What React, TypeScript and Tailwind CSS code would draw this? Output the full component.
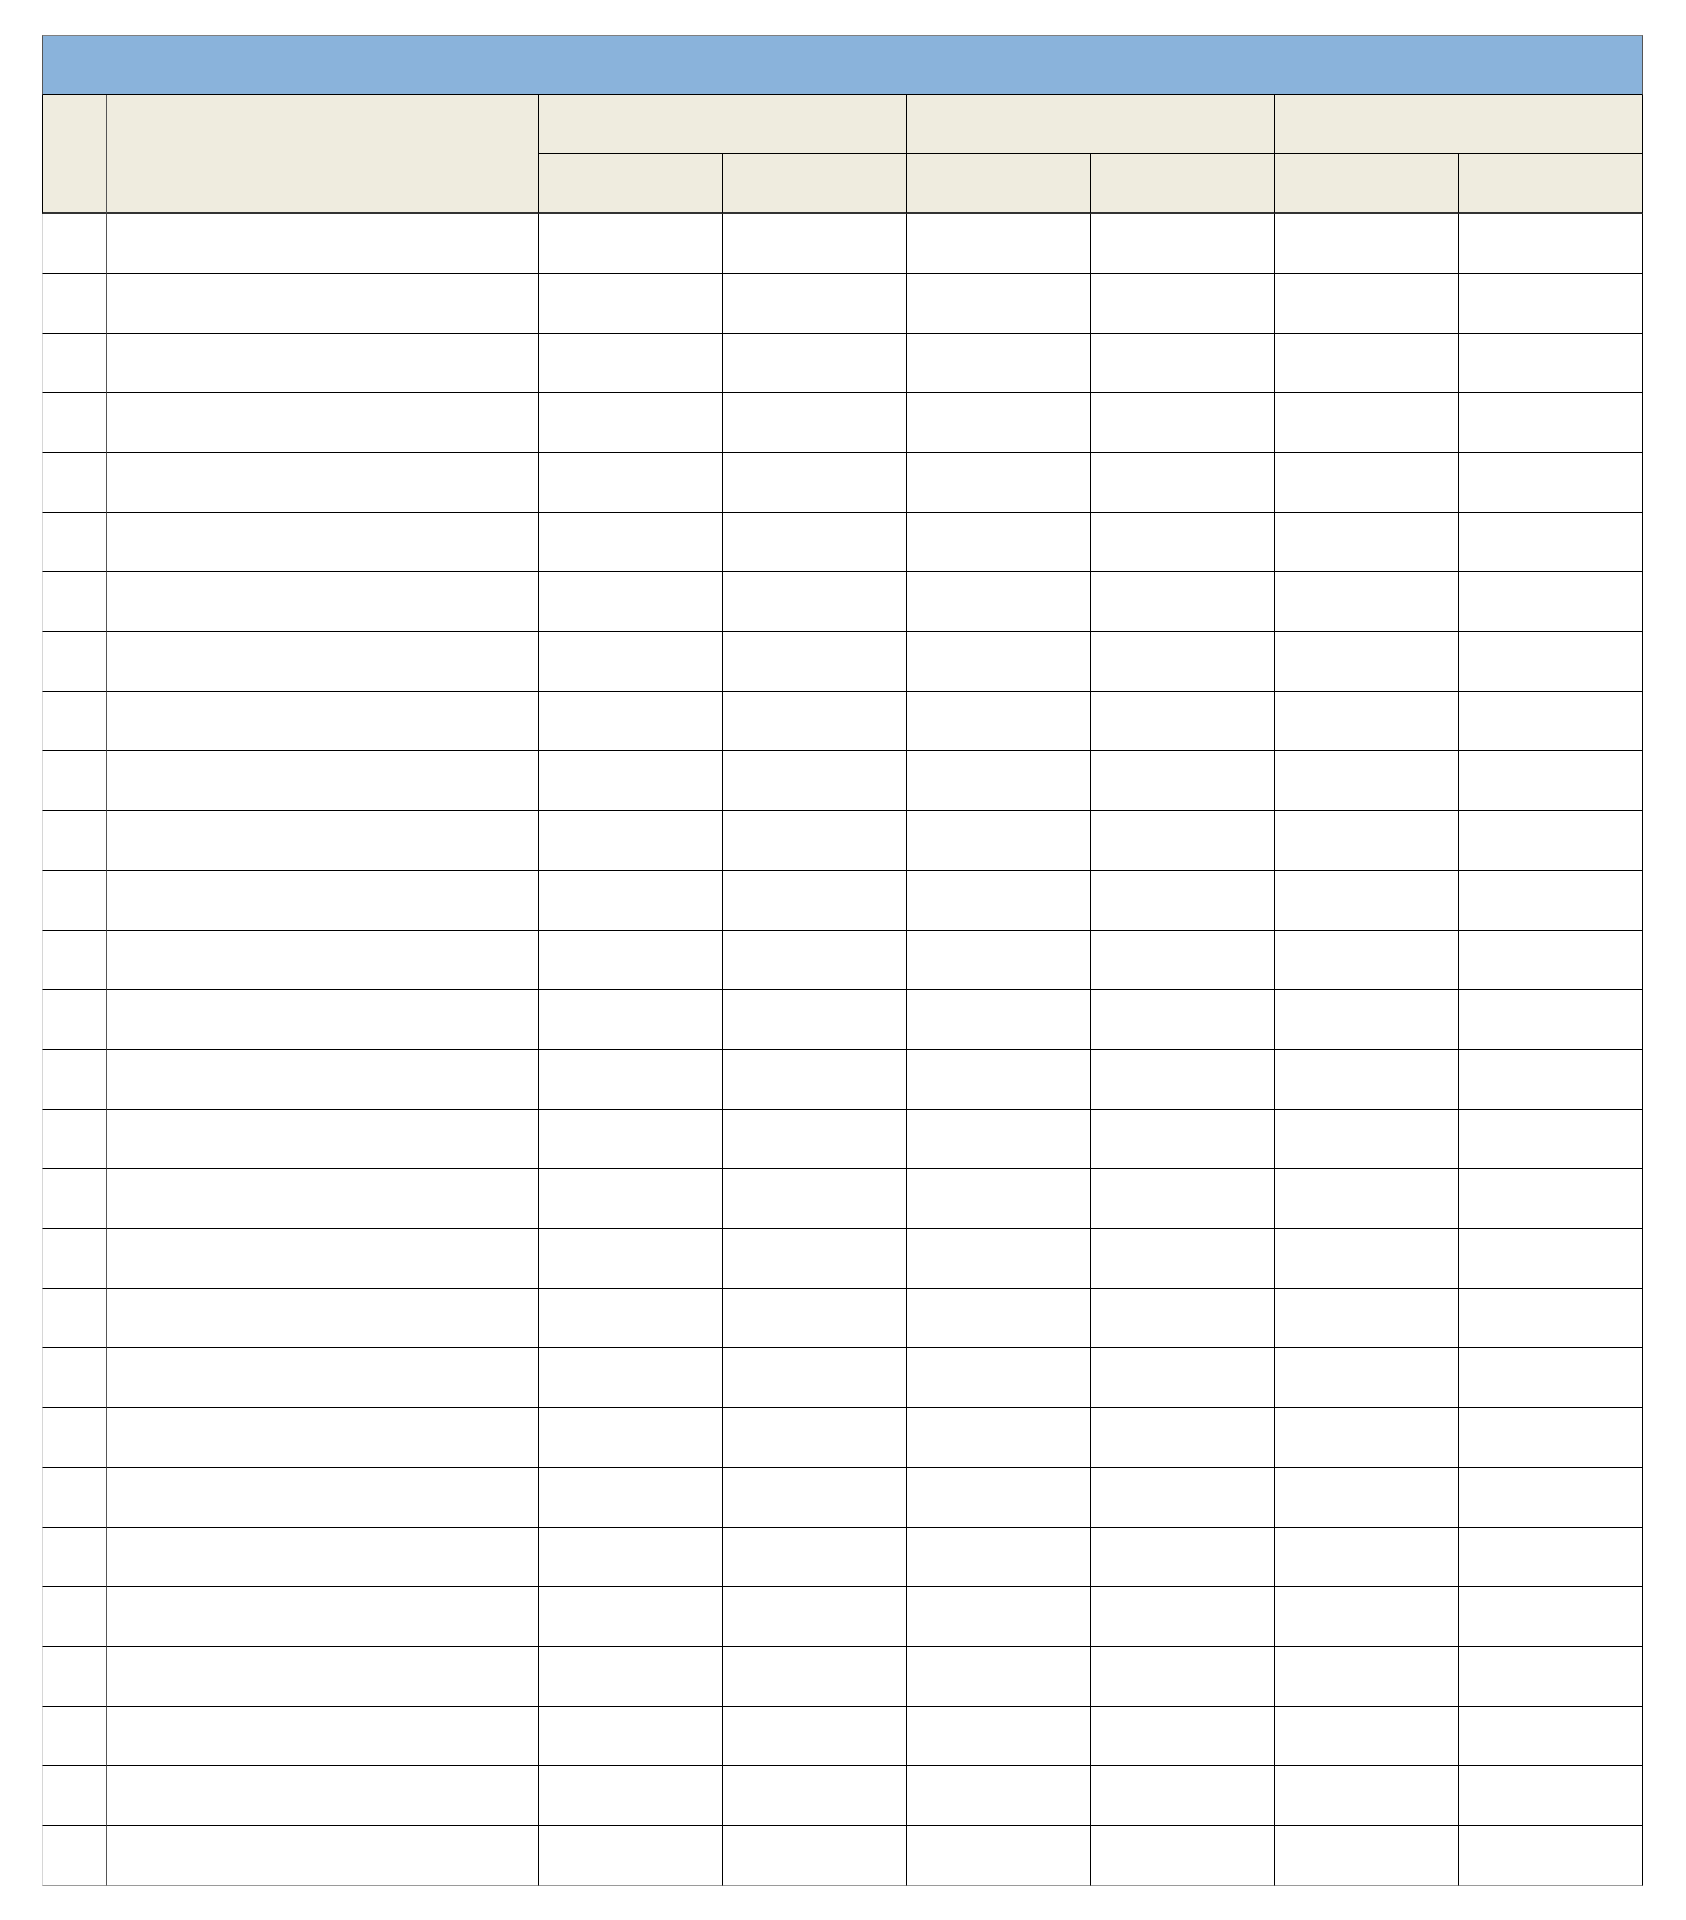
const subCols = 6;
const bodyRows = 28;

function Cell({ className = "" }: { className?: string }) {
  return <div className={`border-r border-b border-black ${className}`} />;
}

export default function App() {
  return (
    <div className="min-h-[1920px] w-[1686px] bg-white pl-[42px] pt-[35px]">
      <div className="grid w-[1601px] grid-cols-[65px_432px_repeat(6,184px)] auto-rows-[59.71px]">
        {/* title bar */}
        <div className="col-span-8 border-t border-l border-r border-b border-t-[#7f7f7f] border-l-[#555] border-r-[#555] border-b-black bg-[#8ab3db]" />

        {/* header, two levels */}
        <div className="row-span-2 border-l border-r border-b-2 border-l-black border-r-[#555] border-b-[#333] bg-[#efecdf]" />
        <div className="row-span-2 border-r border-b-2 border-r-black border-b-[#333] bg-[#efecdf]" />
        {[0, 1, 2].map((g) => (
          <Cell key={`g${g}`} className="col-span-2 bg-[#efecdf]" />
        ))}
        {Array.from({ length: subCols }).map((_, i) => (
          <div
            key={`s${i}`}
            className="border-r border-b-2 border-r-black border-b-[#333] bg-[#efecdf]"
          />
        ))}

        {/* body */}
        {Array.from({ length: bodyRows }).map((_, r) => {
          const last = r === bodyRows - 1;
          const bottom = last ? "border-b-[#9a9a9a]" : "";
          return [
            <Cell
              key={`r${r}a`}
              className={`border-l border-l-[#d6d6d6] border-r-[#555] ${bottom}`}
            />,
            ...Array.from({ length: 7 }).map((_, c) => (
              <Cell key={`r${r}c${c}`} className={bottom} />
            )),
          ];
        })}
      </div>
    </div>
  );
}
